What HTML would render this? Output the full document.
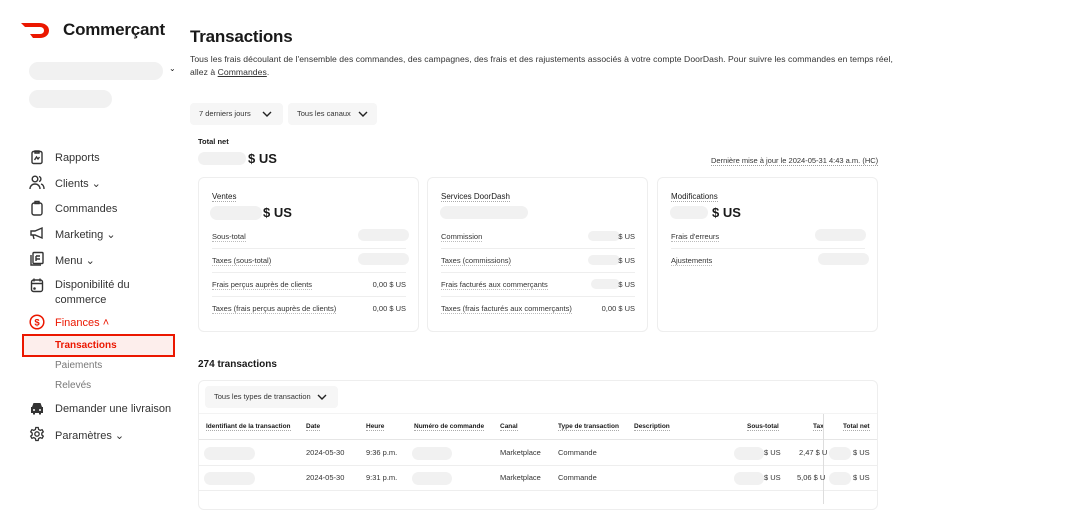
<!DOCTYPE html>
<html><head><meta charset="utf-8"><style>
*{box-sizing:border-box;margin:0;padding:0}
body{width:1080px;height:500px;overflow:hidden;background:#fff;font-family:"Liberation Sans",sans-serif;color:#191919;position:relative}
.a{position:absolute;white-space:nowrap}
.sk{position:absolute;background:#f1f1f1;border-radius:9px}
.nav{font-size:11px;color:#333}
.ic{position:absolute;left:29px;width:16px;height:16px}
.card{position:absolute;top:177px;width:221px;height:155px;border:1px solid #eee;border-radius:6px}
.ct{font-size:8px;left:13px;top:14px;border-bottom:1px dotted #aaa}
.amt{font-size:13px;font-weight:bold;top:27px}
.lbl{font-size:7.5px;color:#333;left:13px;border-bottom:1px dotted #bbb}
.val{font-size:7.5px;color:#333;right:12px}
.hr{position:absolute;left:13px;right:12px;height:1px;background:#eee}
.th{font-size:6.5px;font-weight:bold;top:423px;border-bottom:1px dotted #aaa}
.td{font-size:7.5px;color:#333}
.btn{position:absolute;background:#f6f6f6;border-radius:4px;font-size:7.5px;color:#333;padding-left:9px;line-height:22px}
.chev{position:absolute;top:7px}
</style></head><body>
<svg class="a" style="left:21px;top:22px" width="29" height="17" viewBox="0 0 29 17"><path d="M0 1h18c6 0 10 3 10 7.5S24 16 19 16h-7l-3-4h10c2.5 0 4-1.5 4-3.5S21.5 5 19 5H4z" fill="#eb1700"/></svg>
<div class="a" style="left:63px;top:20px;font-size:17px;font-weight:bold;letter-spacing:-.2px">Commerçant</div>
<div class="sk" style="left:29px;top:62px;width:134px;height:18px"></div>
<div class="a" style="left:169px;top:64px;font-size:8px">⌄</div>
<div class="sk" style="left:29px;top:90px;width:83px;height:18px"></div>
<svg class="ic" style="top:149px" viewBox="0 0 16 16" fill="none" stroke="#333" stroke-width="1.4"><rect x="3" y="2.5" width="10" height="12" rx="1.5"/><path d="M6 2h4v2H6zM5.5 11l2-3 1.5 2 1.5-2"/></svg>
<div class="a nav" style="left:55px;top:152px">Rapports</div>
<svg class="ic" style="top:174px" viewBox="0 0 16 16" fill="none" stroke="#333" stroke-width="1.4"><circle cx="6" cy="5" r="2.8"/><path d="M1 15c0-3 2.2-5 5-5s5 2 5 5"/><path d="M10 2.5a2.6 2.6 0 010 5M12 10c2 .5 3 2.5 3 5"/></svg>
<div class="a nav" style="left:55px;top:177px">Clients ⌄</div>
<svg class="ic" style="top:200px" viewBox="0 0 16 16" fill="none" stroke="#333" stroke-width="1.4"><rect x="3" y="3" width="10" height="12" rx="2"/><path d="M6 1.5h4v2H6z"/></svg>
<div class="a nav" style="left:55px;top:203px">Commandes</div>
<svg class="ic" style="top:225px" viewBox="0 0 16 16" fill="none" stroke="#333" stroke-width="1.4"><path d="M2 6h4l7-3v10l-7-3H2zM4 10l1 4"/></svg>
<div class="a nav" style="left:55px;top:228px">Marketing ⌄</div>
<svg class="ic" style="top:251px" viewBox="0 0 16 16" fill="none" stroke="#333" stroke-width="1.4"><rect x="4" y="1.5" width="10" height="11" rx="1"/><path d="M2 4v10h10M7 5h4M7 8h4M7 5v5"/></svg>
<div class="a nav" style="left:55px;top:254px">Menu ⌄</div>
<svg class="ic" style="top:277px" viewBox="0 0 16 16" fill="none" stroke="#333" stroke-width="1.4"><rect x="2.5" y="3" width="11" height="11.5" rx="2"/><path d="M5 1.5v3M11 1.5v3M2.5 6.5h11"/><circle cx="5.5" cy="11.5" r=".6" fill="#333"/></svg>
<div class="a nav" style="left:55px;top:278px;line-height:15px">Disponibilité du<br>commerce</div>
<svg class="ic" style="top:314px" viewBox="0 0 16 16" fill="none" stroke="#eb1700" stroke-width="1.5"><circle cx="8" cy="8" r="6.8"/><text x="8" y="11.3" font-size="9.5" font-weight="bold" text-anchor="middle" fill="#eb1700" stroke="none" font-family="Liberation Sans">$</text></svg>
<div class="a nav" style="left:55px;top:317px;color:#eb1700">Finances ˄</div>
<div class="a" style="left:22px;top:334px;width:153px;height:23px;border:2px solid #eb1700;background:#fdeeec"></div>
<div class="a" style="left:55px;top:340px;font-size:10px;font-weight:bold;color:#eb1700">Transactions</div>
<div class="a" style="left:55px;top:360px;font-size:10px;color:#777">Paiements</div>
<div class="a" style="left:55px;top:380px;font-size:10px;color:#777">Relevés</div>
<svg class="ic" style="top:400px" viewBox="0 0 16 16" fill="#333"><path d="M3 7l1.5-4h7L13 7h1v6h-2v1.5h-2V13H6v1.5H4V13H2V7z"/><circle cx="5" cy="10" r="1" fill="#fff"/><circle cx="11" cy="10" r="1" fill="#fff"/></svg>
<div class="a nav" style="left:55px;top:403px">Demander une livraison</div>
<svg class="ic" style="top:426px" viewBox="0 0 16 16" fill="none" stroke="#333" stroke-width="1.3"><path d="M6.8 1.5h2.4l.4 2 1.6.9 1.9-.7 1.2 2.1-1.5 1.3v1.8l1.5 1.3-1.2 2.1-1.9-.7-1.6.9-.4 2H6.8l-.4-2-1.6-.9-1.9.7-1.2-2.1 1.5-1.3V7.1L1.7 5.8l1.2-2.1 1.9.7 1.6-.9z"/><circle cx="8" cy="8" r="2.2"/></svg>
<div class="a nav" style="left:55px;top:429px">Paramètres ⌄</div>

<div class="a" style="left:190px;top:27px;font-size:17px;font-weight:bold;letter-spacing:-.2px">Transactions</div>
<div class="a" style="left:190px;top:53px;font-size:8.6px;color:#333;line-height:12.5px;letter-spacing:.05px">Tous les frais découlant de l'ensemble des commandes, des campagnes, des frais et des rajustements associés à votre compte DoorDash. Pour suivre les commandes en temps réel,<br>allez à <u>Commandes</u>.</div>
<div class="btn" style="left:190px;top:103px;width:93px;height:22px">7 derniers jours <svg class="chev" style="left:72px" width="10" height="8" viewBox="0 0 10 8"><path d="M1 2l4 4 4-4" fill="none" stroke="#222" stroke-width="1.4"/></svg></div>
<div class="btn" style="left:288px;top:103px;width:89px;height:22px">Tous les canaux <svg class="chev" style="left:70px" width="10" height="8" viewBox="0 0 10 8"><path d="M1 2l4 4 4-4" fill="none" stroke="#222" stroke-width="1.4"/></svg></div>
<div class="a" style="left:198px;top:137px;font-size:7.5px;font-weight:bold">Total net</div>
<div class="sk" style="left:198px;top:152px;width:48px;height:13px"></div>
<div class="a" style="left:248px;top:151px;font-size:13px;font-weight:bold">$ US</div>
<div class="a" style="left:711px;top:156px;font-size:7.5px;color:#333;border-bottom:1px dotted #999">Dernière mise à jour le 2024-05-31 4:43 a.m. (HC)</div>

<div class="card" style="left:198px">
<div class="a ct">Ventes</div>
<div class="sk" style="left:11px;top:28px;width:52px;height:14px"></div>
<div class="a amt" style="left:64px">$ US</div>
<div class="a lbl" style="top:54px">Sous-total</div><div class="sk" style="left:159px;top:51px;width:51px;height:12px"></div>
<div class="hr" style="top:70px"></div>
<div class="a lbl" style="top:78px">Taxes (sous-total)</div><div class="sk" style="left:159px;top:75px;width:51px;height:12px"></div>
<div class="hr" style="top:94px"></div>
<div class="a lbl" style="top:102px">Frais perçus auprès de clients</div><div class="a val" style="top:102px">0,00 $ US</div>
<div class="hr" style="top:118px"></div>
<div class="a lbl" style="top:126px">Taxes (frais perçus auprès de clients)</div><div class="a val" style="top:126px">0,00 $ US</div>
</div>
<div class="card" style="left:427px">
<div class="a ct">Services DoorDash</div>
<div class="sk" style="left:12px;top:28px;width:88px;height:13px"></div>
<div class="a lbl" style="top:54px">Commission</div><div class="sk" style="left:160px;top:53px;width:32px;height:10px"></div><div class="a val" style="top:54px">$ US</div>
<div class="hr" style="top:70px"></div>
<div class="a lbl" style="top:78px">Taxes (commissions)</div><div class="sk" style="left:160px;top:77px;width:32px;height:10px"></div><div class="a val" style="top:78px">$ US</div>
<div class="hr" style="top:94px"></div>
<div class="a lbl" style="top:102px">Frais facturés aux commerçants</div><div class="sk" style="left:163px;top:101px;width:29px;height:10px"></div><div class="a val" style="top:102px">$ US</div>
<div class="hr" style="top:118px"></div>
<div class="a lbl" style="top:126px">Taxes (frais facturés aux commerçants)</div><div class="a val" style="top:126px">0,00 $ US</div>
</div>
<div class="card" style="left:657px">
<div class="a ct">Modifications</div>
<div class="sk" style="left:12px;top:28px;width:38px;height:13px"></div>
<div class="a amt" style="left:54px">$ US</div>
<div class="a lbl" style="top:54px">Frais d'erreurs</div><div class="sk" style="left:157px;top:51px;width:51px;height:12px"></div>
<div class="hr" style="top:70px"></div>
<div class="a lbl" style="top:78px">Ajustements</div><div class="sk" style="left:160px;top:75px;width:51px;height:12px"></div>
</div>

<div class="a" style="left:198px;top:359px;font-size:10px;font-weight:bold">274 transactions</div>
<div class="a" style="left:198px;top:380px;width:680px;height:130px;border:1px solid #eee;border-radius:6px"></div>
<div class="btn" style="left:205px;top:386px;width:133px;height:22px">Tous les types de transaction <svg class="chev" style="left:112px" width="10" height="8" viewBox="0 0 10 8"><path d="M1 2l4 4 4-4" fill="none" stroke="#222" stroke-width="1.4"/></svg></div>
<div class="a" style="left:199px;top:413px;width:678px;height:1px;background:#f3f3f3"></div>
<div class="a th" style="left:206px">Identifiant de la transaction</div>
<div class="a th" style="left:306px">Date</div>
<div class="a th" style="left:366px">Heure</div>
<div class="a th" style="left:414px">Numéro de commande</div>
<div class="a th" style="left:500px">Canal</div>
<div class="a th" style="left:558px">Type de transaction</div>
<div class="a th" style="left:634px">Description</div>
<div class="a th" style="left:747px">Sous-total</div>
<div class="a th" style="left:813px">Tax</div>
<div class="a th" style="left:843px">Total net</div>
<div class="a" style="left:199px;top:439px;width:678px;height:1px;background:#e6e6e6"></div>
<div class="a" style="left:199px;top:465px;width:678px;height:1px;background:#eee"></div>
<div class="a" style="left:199px;top:490px;width:678px;height:1px;background:#eee"></div>
<div class="a" style="left:823px;top:414px;width:1px;height:90px;background:#ddd"></div>

<div class="sk" style="left:204px;top:447px;width:51px;height:13px"></div>
<div class="a td" style="left:306px;top:448px">2024-05-30</div>
<div class="a td" style="left:366px;top:448px">9:36 p.m.</div>
<div class="sk" style="left:412px;top:447px;width:40px;height:13px"></div>
<div class="a td" style="left:500px;top:448px">Marketplace</div>
<div class="a td" style="left:558px;top:448px">Commande</div>
<div class="sk" style="left:734px;top:447px;width:30px;height:13px"></div>
<div class="a td" style="left:764px;top:448px">$ US</div>
<div class="a td" style="left:799px;top:448px">2,47 $ U</div>
<div class="sk" style="left:829px;top:447px;width:22px;height:13px"></div>
<div class="a td" style="left:853px;top:448px">$ US</div>

<div class="sk" style="left:204px;top:472px;width:51px;height:13px"></div>
<div class="a td" style="left:306px;top:473px">2024-05-30</div>
<div class="a td" style="left:366px;top:473px">9:31 p.m.</div>
<div class="sk" style="left:412px;top:472px;width:40px;height:13px"></div>
<div class="a td" style="left:500px;top:473px">Marketplace</div>
<div class="a td" style="left:558px;top:473px">Commande</div>
<div class="sk" style="left:734px;top:472px;width:30px;height:13px"></div>
<div class="a td" style="left:764px;top:473px">$ US</div>
<div class="a td" style="left:797px;top:473px">5,06 $ U</div>
<div class="sk" style="left:829px;top:472px;width:22px;height:13px"></div>
<div class="a td" style="left:853px;top:473px">$ US</div>
</body></html>
